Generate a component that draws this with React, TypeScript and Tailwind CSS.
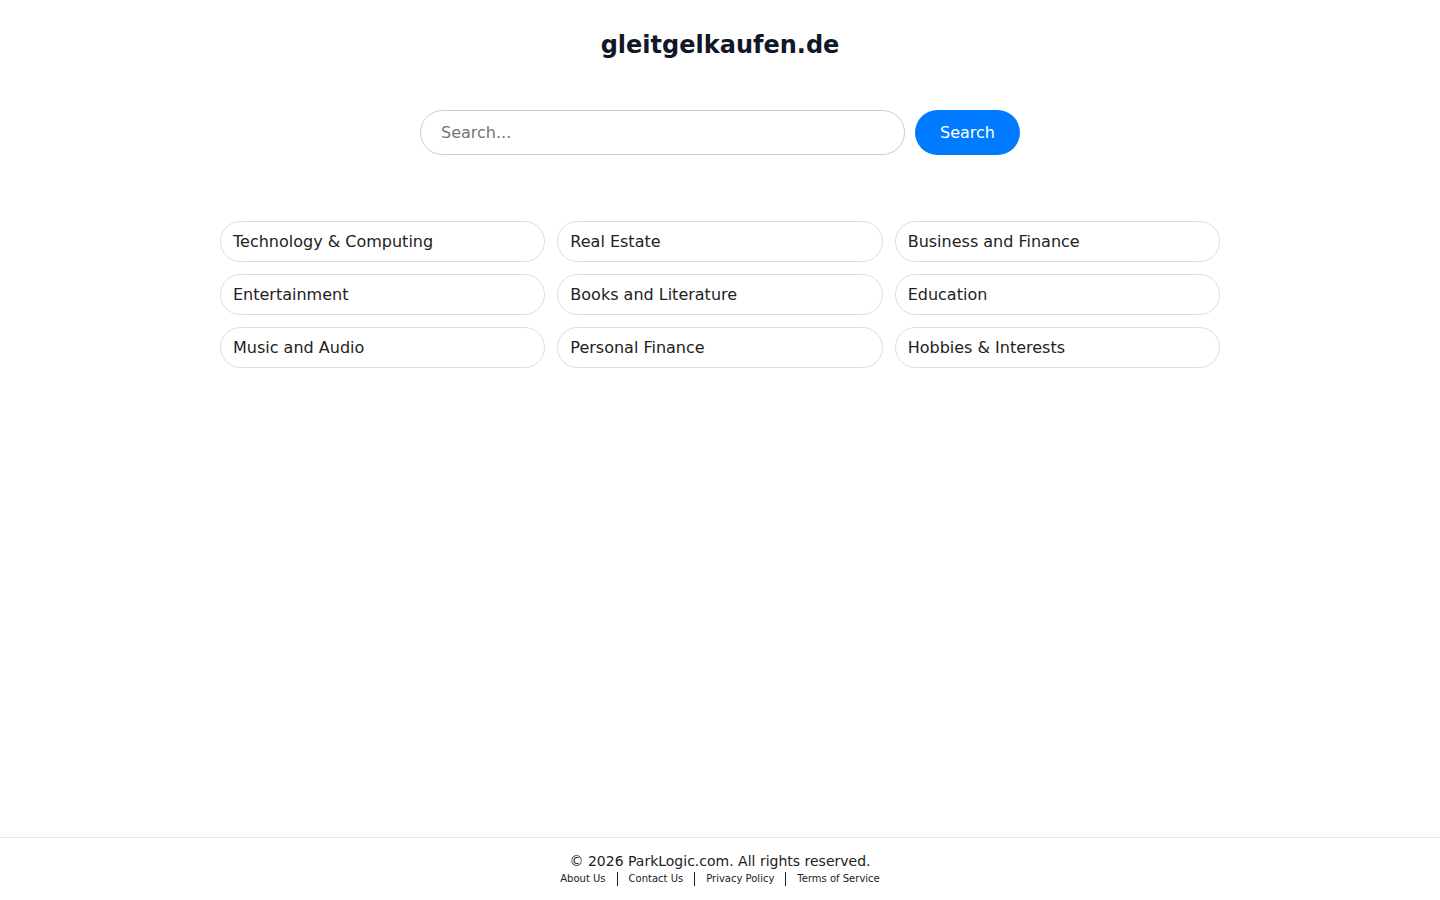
const categories: string[] = [
  "Technology & Computing",
  "Real Estate",
  "Business and Finance",
  "Entertainment",
  "Books and Literature",
  "Education",
  "Music and Audio",
  "Personal Finance",
  "Hobbies & Interests",
];

const footerLinks: string[] = ["About Us", "Contact Us", "Privacy Policy", "Terms of Service"];

export default function App() {
  return (
    <div className="min-h-screen flex flex-col bg-white font-['DejaVu_Sans',sans-serif] text-[#222]">
      <main className="flex-1">
        {/* Header */}
        <h1 className="pt-[29px] text-center text-[24px] leading-[32px] font-bold text-[#111827]">
          gleitgelkaufen.de
        </h1>

        {/* Search */}
        <form className="mt-[49px] flex justify-center gap-[10px]" onSubmit={(e) => e.preventDefault()}>
          <input
            type="text"
            placeholder="Search..."
            className="w-[485px] h-[45px] rounded-full border border-[#ccc] px-[20px] text-[16px] text-[#333] placeholder:text-[#757575] outline-none"
          />
          <button
            type="submit"
            className="w-[105px] h-[45px] rounded-full bg-[#007bff] text-white text-[16px]"
          >
            Search
          </button>
        </form>

        {/* Categories */}
        <div className="mx-auto mt-[66px] w-[1000px] grid grid-cols-3 gap-x-[12px] gap-y-[12px]">
          {categories.map((c) => (
            <a
              key={c}
              href="#"
              className="h-[41px] flex items-center rounded-full border border-[#ddd] px-[12px] text-[16px] text-[#222]"
            >
              {c}
            </a>
          ))}
        </div>
      </main>

      {/* Footer */}
      <footer className="border-t border-[#e5e5e5] pt-[13px] pb-[14px] text-center">
        <p className="text-[14px] leading-[20px] text-[#222]">© 2026 ParkLogic.com. All rights reserved.</p>
        <div className="mt-[1px] flex justify-center items-center text-[10px] leading-[14px] text-[#222]">
          {footerLinks.map((l, i) => (
            <a
              key={l}
              href="#"
              className={
                i === 0
                  ? "pr-[11px]"
                  : i === footerLinks.length - 1
                  ? "pl-[11px] border-l border-[#222]"
                  : "px-[11px] border-l border-[#222]"
              }
            >
              {l}
            </a>
          ))}
        </div>
      </footer>
    </div>
  );
}
